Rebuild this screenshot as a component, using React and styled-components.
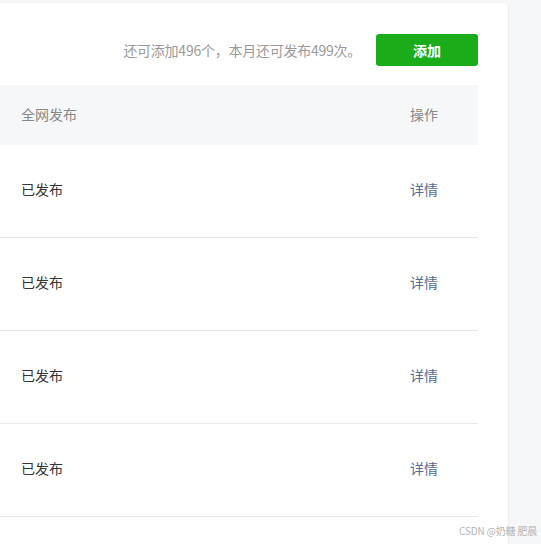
import React from "react";
import styled, { createGlobalStyle } from "styled-components";

const GlobalStyle = createGlobalStyle`
  html, body {
    margin: 0;
    padding: 0;
    background: #f6f7f9;
    font-family: "Noto Sans CJK SC", "Noto Sans", sans-serif;
  }
`;

const Page = styled.div`
  width: 541px;
  height: 544px;
  overflow: hidden;
  position: relative;
  background: #f6f7f9;
  padding-top: 3px;
  box-sizing: border-box;
`;

const Card = styled.div`
  width: 508px;
  height: 560px;
  background: #ffffff;
  border-radius: 0 4px 0 0;
  box-shadow: 1px 0 1px rgba(0, 0, 0, 0.04);
  padding-right: 30px;
  box-sizing: border-box;
`;

const Toolbar = styled.div`
  display: flex;
  justify-content: flex-end;
  align-items: center;
  gap: 15px;
  padding-top: 31px;
  height: 32px;
`;

const Notice = styled.span`
  font-size: 14px;
  line-height: 1;
  color: #9a9a9a;
  letter-spacing: -0.25px;
`;

const AddButton = styled.button`
  width: 102px;
  height: 32px;
  border: none;
  border-radius: 3px;
  background: #1aad19;
  color: #ffffff;
  font-family: inherit;
  font-size: 14px;
  font-weight: 700;
  line-height: 1;
  cursor: pointer;
`;

const Table = styled.div`
  margin-top: 19px;
`;

const Row = styled.div`
  display: flex;
  justify-content: space-between;
  align-items: center;
  box-sizing: border-box;
  height: ${({ $head }) => ($head ? "60px" : "93px")};
  background: ${({ $head }) => ($head ? "#f6f7f9" : "transparent")};
  border-bottom: ${({ $head }) => ($head ? "none" : "1px solid #e7e7eb")};
  padding: ${({ $head }) => ($head ? "0 40px 2px 21px" : "0 40px 4px 21px")};
  font-size: 14px;
  line-height: 1;
`;

const Cell = styled.span`
  color: ${({ $head }) => ($head ? "#888888" : "#353535")};
`;

const Link = styled.a`
  color: #576b95;
  text-decoration: none;
  cursor: pointer;
`;

const Watermark = styled.div`
  position: absolute;
  right: 4px;
  bottom: 6px;
  font-size: 10px;
  color: #b5b5b5;
  letter-spacing: -0.2px;
`;

const rows = ["已发布", "已发布", "已发布", "已发布"];

export default function App() {
  return (
    <Page>
      <GlobalStyle />
      <Card>
        <Toolbar>
          <Notice>还可添加496个，本月还可发布499次。</Notice>
          <AddButton>添加</AddButton>
        </Toolbar>
        <Table>
          <Row $head>
            <Cell $head>全网发布</Cell>
            <Cell $head>操作</Cell>
          </Row>
          {rows.map((status, i) => (
            <Row key={i}>
              <Cell>{status}</Cell>
              <Link>详情</Link>
            </Row>
          ))}
        </Table>
      </Card>
      <Watermark>CSDN @奶糖 肥晨</Watermark>
    </Page>
  );
}
